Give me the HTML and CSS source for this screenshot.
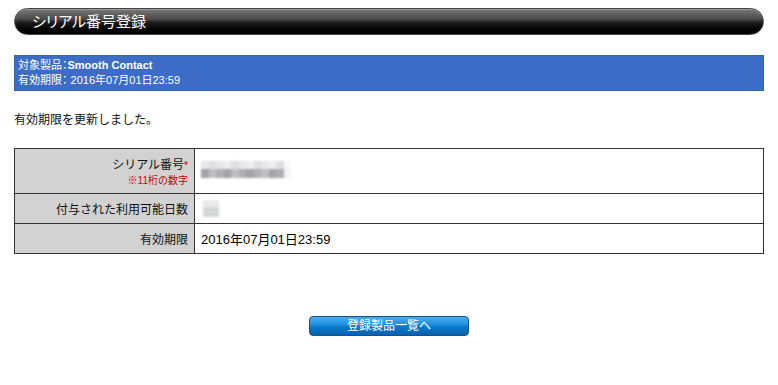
FILE: index.html
```html
<!DOCTYPE html>
<html lang="ja">
<head>
<meta charset="utf-8">
<title>シリアル番号登録</title>
<link rel="stylesheet" href="styles.css">
</head>
<body>
<div class="page">
  <h1 class="title-bar">シリアル番号登録</h1>

  <div class="product-box">
    <div>対象製品：<b>Smooth Contact</b></div>
    <div>有効期限： 2016年07月01日23:59</div>
  </div>

  <p class="message">有効期限を更新しました。</p>

  <table class="info">
    <tr class="row-tall">
      <th>
        <div>シリアル番号<span class="req">*</span></div>
        <div class="note">※11桁の数字</div>
      </th>
      <td>
        <div class="mosaic">
          <div class="mrow top">
            <span class="c1"></span><span class="c2"></span><span class="c1"></span><span class="c3"></span><span class="c2"></span><span class="c1"></span><span class="c3"></span><span class="c2"></span><span class="c1"></span><span class="c3"></span><span class="c2"></span><span class="c4"></span>
          </div>
          <div class="mrow bot">
            <span class="d1"></span><span class="d2"></span><span class="d3"></span><span class="d1"></span><span class="d2"></span><span class="d3"></span><span class="d1"></span><span class="d3"></span><span class="d2"></span><span class="d1"></span><span class="d3"></span><span class="d4"></span>
          </div>
        </div>
      </td>
    </tr>
    <tr>
      <th>付与された利用可能日数</th>
      <td><div class="mosaic-small"><span></span><span></span><span></span><span></span></div></td>
    </tr>
    <tr>
      <th>有効期限</th>
      <td class="value">2016年07月01日23:59</td>
    </tr>
  </table>

  <div class="actions">
    <a class="btn" href="#">登録製品一覧へ</a>
  </div>
</div>
</body>
</html>
```

FILE: styles.css
```css
html, body {
  margin: 0;
  padding: 0;
  background: #fff;
}
body {
  font-family: "Liberation Sans", "Noto Sans CJK JP", sans-serif;
  color: #111;
  font-size: 12px;
}
.page {
  width: 750px;
  padding: 8px 14px 0 14px;
}
.title-bar {
  margin: 0;
  height: 27px;
  box-sizing: border-box;
  border-radius: 14px;
  border: 1px solid #444;
  background: linear-gradient(to bottom, #7a7a7a 0%, #4a4a4a 40%, #1a1a1a 55%, #050505 80%, #000 100%);
  color: #fff;
  font-size: 15px;
  font-weight: normal;
  font-feature-settings: "palt";
  line-height: 25px;
  padding-left: 17px;
  box-shadow: inset 0 1px 0 rgba(255,255,255,0.25);
}
.product-box {
  margin-top: 20px;
  height: 36px;
  box-sizing: border-box;
  background: #3d6cc6;
  border: 1px solid #3563b4;
  color: #fff;
  font-size: 11px;
  line-height: 15px;
  padding: 2px 0 0 3px;
  font-feature-settings: "palt";
}
.product-box b {
  font-weight: bold;
  font-size: 11px;
}
.message {
  margin: 21px 0 0 0;
  font-size: 12px;
  line-height: 16px;
}
.info {
  margin-top: 20px;
  width: 750px;
  border-collapse: collapse;
  font-size: 12px;
}
.info th, .info td {
  border: 1px solid #333;
  height: 30px;
  box-sizing: border-box;
  padding: 0;
}
.info th {
  width: 180px;
  background: #d2d2d2;
  font-weight: normal;
  text-align: right;
  padding-right: 6px;
  color: #111;
}
.info td {
  padding-left: 6px;
  color: #000;
}
.info td.value {
  font-size: 13px;
}
.info .row-tall th,
.info .row-tall td {
  height: 45px;
}
.info .row-tall th {
  padding-top: 3px;
  line-height: 17px;
}
.req {
  color: #cc0000;
  font-size: 10px;
  vertical-align: top;
}
.note {
  color: #cc0000;
  font-size: 10px;
  line-height: 14px;
}
.mosaic {
  display: flex;
  flex-direction: column;
  width: 90px;
  margin-top: -4px;
  filter: blur(1px);
}
.mrow {
  display: flex;
}
.mrow span {
  width: 7.5px;
  height: 9px;
}
.mrow.top span { height: 8px; }
.c1 { background: #e8e8e8; }
.c2 { background: #dedee0; }
.c3 { background: #eeeeee; }
.c4 { background: #f8f8f8; }
.d1 { background: #a4a4a8; }
.d2 { background: #c0bec0; }
.d3 { background: #b0afb4; }
.d4 { background: #f2f4f6; }
.mosaic-small {
  display: grid;
  grid-template-columns: 8px 8px;
  grid-template-rows: 7px 10px;
  width: 16px;
  margin-left: 2px;
  filter: blur(0.8px);
}
.mosaic-small span { background: #d4d6d6; }
.mosaic-small span:nth-child(1),
.mosaic-small span:nth-child(2) { background: #eaeaea; }
.actions {
  display: flex;
  justify-content: center;
  margin-top: 62px;
}
.btn {
  display: block;
  width: 160px;
  height: 20px;
  box-sizing: border-box;
  border: 1px solid #1b4f86;
  border-radius: 4px;
  background: linear-gradient(to bottom, #47aef0 0%, #1b8ede 45%, #0a78cc 55%, #0561ad 100%);
  color: #fff;
  text-decoration: none;
  text-align: center;
  font-size: 12px;
  line-height: 18px;
}
```
